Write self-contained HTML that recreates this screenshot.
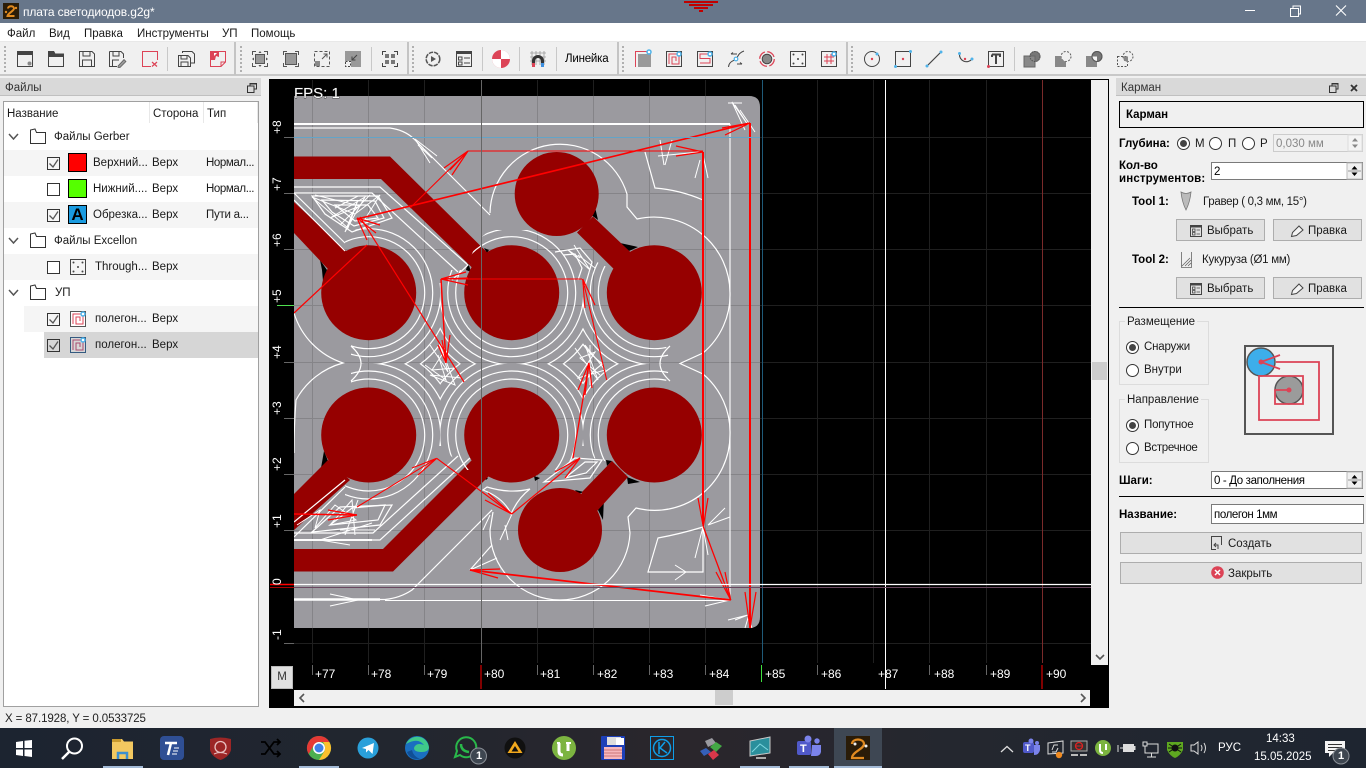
<!DOCTYPE html>
<html><head><meta charset="utf-8"><title>плата светодиодов.g2g*</title>
<style>
html,body{margin:0;padding:0;width:1366px;height:768px;overflow:hidden;background:#f0f0f0;font-family:"Liberation Sans","DejaVu Sans",sans-serif;font-size:11.5px;color:#1a1a1a}
.a{position:absolute}
.t{position:absolute;white-space:nowrap;line-height:14px;margin-top:1px}
.b{font-weight:bold;color:#000}
.n{letter-spacing:-.4px}
.m{letter-spacing:-.25px}
svg.i{position:absolute;top:51px;width:16px;height:16px;overflow:visible}
svg.s{position:absolute;overflow:visible}
.sep{position:absolute;top:47px;width:1px;height:24px;background:#c8c8c8}
.split{position:absolute;top:42px;width:2px;height:33px;background:#c4c4c4}
.grip{position:absolute;top:46px;width:2px;height:26px;background:repeating-linear-gradient(#b0b0b0 0 2px,transparent 2px 4px)}
.row{position:absolute;height:26px}
.cb{position:absolute;left:47px;width:11px;height:11px;border:1px solid #333;background:#fff}
.btn{position:absolute;background:#e1e1e1;border:1px solid #adadad;box-sizing:border-box;height:22px}
.sp{position:absolute;background:#fff;border:1px solid #7a7a7a;box-sizing:border-box}
.r{position:absolute;width:11px;height:11px;border:1px solid #333;border-radius:50%;background:#fff}
.r.on:after{content:"";position:absolute;left:2px;top:2px;width:7px;height:7px;border-radius:50%;background:#444}
.gb{position:absolute;left:1119px;width:88px;border:1px solid #dcdcdc;box-sizing:content-box;height:62px}
.ul{position:absolute;top:766px;height:2px;background:#a3bad6}
.tb{color:#fff}
</style></head><body>
<!-- title bar -->
<div class="a" style="left:0;top:0;width:1366px;height:23px;background:#67768a"></div>
<svg class="s" style="left:3px;top:3px;width:16px;height:16px" viewBox="0 0 16 16"><rect width="16" height="16" fill="#2a1c08"/><path d="M5 5.500C5 2.500 11 2.500 11 5.500 11 8 5 10 4.500 13H11.500" fill="none" stroke="#e08a20" stroke-width="2"/><circle cx="13" cy="5" r="1.200" fill="#e08a20"/><circle cx="3" cy="9" r="1.200" fill="#e08a20"/></svg>
<div class="t" style="left:23px;top:4px;color:#fff;font-size:12px;letter-spacing:-.1px">плата светодиодов.g2g*</div>
<div class="a" style="left:684px;top:1px;width:34px;height:2px;background:#c00000"></div>
<div class="a" style="left:689px;top:4px;width:24px;height:2px;background:#c00000"></div>
<div class="a" style="left:694px;top:7px;width:14px;height:2px;background:#c00000"></div>
<div class="a" style="left:699px;top:10px;width:4px;height:2px;background:#c00000"></div>
<svg class="s" style="left:1240px;top:0;width:120px;height:23px" viewBox="1240 0 120 23"><path d="M1245 10.500H1255" stroke="#fff"/><path d="M1290.500 8.500H1298.500V16.500H1290.500ZM1293 8.500V6H1300.500V14H1298.500" fill="none" stroke="#fff"/><path d="M1336 5.500L1346 15.500M1346 5.500L1336 15.500" stroke="#fff" stroke-width="1.100"/></svg>
<!-- menu -->
<div class="a" style="left:0;top:23px;width:1366px;height:18px;background:#fff"></div>
<div class="t" style="left:7px;top:26px">Файл</div>
<div class="t" style="left:49px;top:26px">Вид</div>
<div class="t" style="left:84px;top:26px">Правка</div>
<div class="t" style="left:137px;top:26px">Инструменты</div>
<div class="t" style="left:222px;top:26px">УП</div>
<div class="t" style="left:251px;top:26px">Помощь</div>
<!-- toolbar -->
<div class="a" style="left:0;top:41px;width:1366px;height:35px;background:#f0f0f0;border-top:1px solid #e8e8e8;border-bottom:2px solid #c8c8c8;box-sizing:border-box"></div>
<div class="grip" style="left:4px"></div><div class="split" style="left:234px"></div><div class="grip" style="left:240px"></div><div class="split" style="left:407px"></div><div class="grip" style="left:412px"></div><div class="split" style="left:617px"></div><div class="grip" style="left:622px"></div><div class="split" style="left:846px"></div><div class="grip" style="left:851px"></div>
<div class="sep" style="left:167px"></div><div class="sep" style="left:371px"></div><div class="sep" style="left:482px"></div><div class="sep" style="left:519px"></div><div class="sep" style="left:556px"></div><div class="sep" style="left:1014px"></div>
<svg class="i" style="left:17px" viewBox="0 0 16 16"><path d="M.5.500H15.500V15.500H.5Z" fill="none" stroke="#444"/><rect width="16" height="4" fill="#444"/><circle cx="12.500" cy="12.500" r="2" fill="#888"/></svg>
<svg class="i" style="left:48px" viewBox="0 0 16 16"><path d="M.5 1V15.500H15.500V3H7L6 1Z" fill="none" stroke="#444"/><path d="M0 0H6L7 2.500H16V6H0Z" fill="#444"/></svg>
<svg class="i" style="left:79px" viewBox="0 0 16 16"><path d="M.5.500H13L15.500 3V15.500H.5ZM4 .5V5H11V.5M3.500 15.500V9H12.500V15.500" fill="none" stroke="#444"/></svg>
<svg class="i" style="left:109px" viewBox="0 0 16 16"><path d="M.5.500H12L14.500 3V7M4 .5V5H10V.5M.5.500V15.500H8M3.500 15V9H10" fill="none" stroke="#444"/><path d="M9 15L15 8.500 17 10.500 11 16.500H9Z" fill="#999" stroke="#555" stroke-width=".7"/></svg>
<svg class="i" style="left:142px" viewBox="0 0 16 16"><path d="M9 15.500H.5V.5H15.500V9" fill="none" stroke="#dc4356"/><path d="M10 11L15 15.500M15 11L10 15.500" stroke="#dc4356" stroke-width="1.200"/></svg>
<svg class="i" style="left:178px" viewBox="0 0 16 16"><path d="M4.500 2V.5H14L16.500 3V12H12.500" fill="none" stroke="#444"/><path d="M.5 4.500H10L12.500 7V15.500H.5ZM3 4.500V8H9V4.500M3 15.500V11H10V15.500" fill="none" stroke="#444"/></svg>
<svg class="i" style="left:210px" viewBox="0 0 16 16"><path d="M.5 9V15.500H11L15.500 11V.5H6" fill="none" stroke="#dc4356"/><path d="M0 0H9V6L6 5 5 9H0Z" fill="#dc4356"/><path d="M4 2L7 2 4 5" fill="#fff"/><path d="M11 15.500V11H15.500" fill="none" stroke="#dc4356"/></svg>
<svg class="i" style="left:252px" viewBox="0 0 16 16"><rect x="3.500" y="3.500" width="9" height="9" fill="#999" stroke="#555"/><path d="M.5 4V.5H4M12 .5H15.500V4M15.500 12V15.500H12M4 15.500H.5V12" fill="none" stroke="#555"/><path d="M8 0L9.500 2H6.500ZM8 16L9.500 14H6.500ZM0 8L2 6.500V9.500ZM16 8L14 6.500V9.500Z" fill="#555"/></svg>
<svg class="i" style="left:283px" viewBox="0 0 16 16"><rect x="2.500" y="2.500" width="11" height="11" fill="#999" stroke="#555"/><path d="M.5 4V.5H4M12 .5H15.500V4M15.500 12V15.500H12M4 15.500H.5V12" fill="none" stroke="#555"/></svg>
<svg class="i" style="left:314px" viewBox="0 0 16 16"><path d="M.5.500H15.500V15.500H.5Z" fill="none" stroke="#555" stroke-dasharray="3 2"/><rect x="1" y="10" width="5" height="5" fill="#888"/><path d="M8 8L13 3M9.500 3H13V6.500" fill="none" stroke="#555"/></svg>
<svg class="i" style="left:345px" viewBox="0 0 16 16"><rect width="16" height="16" fill="#999"/><rect x="0" y="10" width="6" height="6" fill="#f0f0f0"/><path d="M.5 10.500H5.500V15.500H.5Z" fill="none" stroke="#444" stroke-dasharray="2 1.500"/><path d="M12 4L7 9M7 5.500V9H10.500" fill="none" stroke="#444"/></svg>
<svg class="i" style="left:382px" viewBox="0 0 16 16"><path d="M.5 4V.5H4M12 .5H15.500V4M15.500 12V15.500H12M4 15.500H.5V12" fill="none" stroke="#444"/><rect x="3" y="3" width="4" height="4" fill="#777"/><rect x="9" y="3" width="4" height="4" fill="#777"/><rect x="3" y="9" width="4" height="4" fill="#777"/><rect x="9" y="9" width="4" height="4" fill="#777"/></svg>
<svg class="i" style="left:425px" viewBox="0 0 16 16"><circle cx="8" cy="8" r="6.800" fill="none" stroke="#555" stroke-width="1.500" stroke-dasharray="4.500 1"/><path d="M6 5L11 8 6 11Z" fill="#555"/></svg>
<svg class="i" style="left:456px" viewBox="0 0 16 16"><path d="M.5.500H15.500V15.500H.5Z" fill="none" stroke="#444"/><rect width="16" height="3" fill="#444"/><path d="M2.500 6H6V9H2.500ZM2.500 11H6V14H2.500ZM8 7H14M8 12H14" fill="none" stroke="#444"/></svg>
<svg class="s" style="left:492px;top:50px;width:18px;height:18px" viewBox="0 0 18 18"><circle cx="9" cy="9" r="9" fill="#dc4356"/><path d="M9 9V0A9 9 0 0 1 18 9ZM9 9V18A9 9 0 0 1 0 9Z" fill="#fff"/></svg>
<svg class="i" style="left:530px" viewBox="0 0 16 16"><path d="M2 0V14M6 0V14M10 0V14M14 0V14M0 2H16M0 6H16M0 10H16" stroke="#999" stroke-width=".8"/><path d="M3.500 16V10A4.500 4.500 0 0 1 12.500 10V16" fill="none" stroke="#333" stroke-width="3"/><rect x="2" y="12" width="3" height="4" fill="#dc4356"/><rect x="11" y="12" width="3" height="4" fill="#3c8fe0"/></svg>
<div class="t" style="left:565px;top:51px;color:#000;letter-spacing:-.2px">Линейка</div>
<svg class="i" style="left:635px" viewBox="0 0 16 16"><path d="M.5 16V.5H14" fill="none" stroke="#dc4356"/><rect x="3" y="3" width="13" height="13" fill="#999"/><circle cx="14" cy="1" r="2" fill="#fff" stroke="#4fb3ea" stroke-width="1.500"/></svg>
<svg class="i" style="left:666px" viewBox="0 0 16 16"><path d="M.5.500H15.500V15.500H.5Z" fill="none" stroke="#444"/><path d="M3 13V3H13V13H6V6H10V10" fill="none" stroke="#dc4356"/><circle cx="13" cy="3" r="2" fill="#fff" stroke="#4fb3ea" stroke-width="1.500"/></svg>
<svg class="i" style="left:697px" viewBox="0 0 16 16"><path d="M.5.500H15.500V15.500H.5Z" fill="none" stroke="#444"/><path d="M13 3H3V7.500H13V12H3" fill="none" stroke="#dc4356"/><circle cx="13" cy="3" r="2" fill="#fff" stroke="#4fb3ea" stroke-width="1.500"/></svg>
<svg class="i" style="left:728px" viewBox="0 0 16 16"><path d="M.5 16C1 10 6 10 8 8S10 2 16 0" fill="none" stroke="#444"/><path d="M3 3H9M3 3L5 1.500M9 13H14M14 13L12 11.500" stroke="#444" fill="none"/><circle cx="8" cy="8" r="1.800" fill="#fff" stroke="#4fb3ea" stroke-width="1.200"/></svg>
<svg class="i" style="left:759px" viewBox="0 0 16 16"><circle cx="8" cy="8" r="7.300" fill="none" stroke="#dc4356" stroke-width="1.300" stroke-dasharray="9 2.500"/><circle cx="8" cy="8" r="4.800" fill="#888" stroke="#444"/></svg>
<svg class="i" style="left:790px" viewBox="0 0 16 16"><path d="M.5.500H15.500V15.500H.5Z" fill="#f4f4f4" stroke="#444"/><circle cx="3.500" cy="3.500" r="1" fill="#444"/><circle cx="12.500" cy="3.500" r="1" fill="#444"/><circle cx="8" cy="8" r="1" fill="#444"/><circle cx="3.500" cy="12.500" r="1" fill="#444"/><circle cx="12.500" cy="12.500" r="1" fill="#444"/></svg>
<svg class="i" style="left:821px" viewBox="0 0 16 16"><path d="M.5.500H15.500V15.500H.5Z" fill="none" stroke="#444"/><path d="M6 3V13M10 3V13M3 6H13M3 10H13" fill="none" stroke="#dc4356"/><circle cx="13" cy="3" r="2" fill="#fff" stroke="#4fb3ea" stroke-width="1.500"/></svg>
<svg class="i" style="left:864px" viewBox="0 0 16 16"><circle cx="8" cy="8" r="7.500" fill="none" stroke="#444"/><circle cx="8" cy="8" r="1.200" fill="#dc4356"/><circle cx="13" cy="3" r="1.500" fill="#4fb3ea"/></svg>
<svg class="i" style="left:895px" viewBox="0 0 16 16"><path d="M.5.500H15.500V15.500H.5Z" fill="none" stroke="#444"/><circle cx="8" cy="8" r="1.200" fill="#dc4356"/><circle cx="15.500" cy=".5" r="1.500" fill="#4fb3ea"/><circle cx=".5" cy="15.500" r="1.500" fill="#4fb3ea"/></svg>
<svg class="i" style="left:926px" viewBox="0 0 16 16"><path d="M1 15L15 1" stroke="#444" stroke-width="1.200"/><circle cx="15" cy="1" r="1.500" fill="#4fb3ea"/><circle cx="1" cy="15" r="1.500" fill="#4fb3ea"/></svg>
<svg class="i" style="left:957px" viewBox="0 0 16 16"><path d="M2.500 3A7 7 0 0 0 15 8" fill="none" stroke="#444" stroke-width="1.100"/><circle cx="8" cy="8" r="1.200" fill="#dc4356"/><circle cx="2.500" cy="2.500" r="1.500" fill="#4fb3ea"/><circle cx="15" cy="8" r="1.500" fill="#4fb3ea"/></svg>
<svg class="i" style="left:988px" viewBox="0 0 16 16"><path d="M.5.500H15.500V15.500H.5Z" fill="none" stroke="#444"/><path d="M4 3.500H12V6M8 3.500V13" fill="none" stroke="#444" stroke-width="2"/><path d="M4 3.500V6" stroke="#444" stroke-width="2"/><circle cx=".5" cy="15.500" r="1.500" fill="#dc4356"/></svg>
<svg class="i" style="left:1024px" viewBox="0 0 16 16"><circle cx="11" cy="5.500" r="5.500" fill="#777"/><rect y="5" width="11" height="11" fill="#888" stroke="#666"/><circle cx="11" cy="5.500" r="5" fill="none" stroke="#555" stroke-dasharray="1.500 1"/></svg>
<svg class="i" style="left:1055px" viewBox="0 0 16 16"><circle cx="11" cy="5.500" r="5" fill="none" stroke="#555" stroke-dasharray="2 1.500"/><path d="M0 5H6A5.500 5.500 0 0 0 11 10.500V16H0Z" fill="#888"/></svg>
<svg class="i" style="left:1086px" viewBox="0 0 16 16"><rect y="5" width="11" height="11" fill="#888"/><circle cx="11" cy="5.500" r="5.500" fill="#777"/><path d="M6 5.500H11V11A5.500 5.500 0 0 1 6 5.500Z" fill="#f4f4f4"/><circle cx="11" cy="5.500" r="5" fill="none" stroke="#555"/></svg>
<svg class="i" style="left:1117px" viewBox="0 0 16 16"><rect x=".5" y="5.500" width="10" height="10" fill="none" stroke="#555" stroke-dasharray="2 1.500"/><circle cx="11" cy="5.500" r="5" fill="none" stroke="#555" stroke-dasharray="2 1.500"/><path d="M6 5.500H11V11A5.500 5.500 0 0 1 6 5.500Z" fill="#888"/></svg>

<!-- left dock -->
<div class="a" style="left:0;top:78px;width:261px;height:17px;background:#d9d9d9;border-bottom:1px solid #c0c0c0"></div>
<div class="t" style="left:5px;top:80px;color:#333">Файлы</div>
<svg class="s" style="left:247px;top:83px;width:10px;height:10px" viewBox="0 0 10 10"><path d="M3 2.500V.5H9.500V6H7.500M.5 3H7V9.500H.5Z" fill="none" stroke="#333"/><path d="M0 3H7.500M3 1H9.500" stroke="#333"/></svg>
<div class="a" style="left:3px;top:101px;width:256px;height:606px;background:#fff;border:1px solid #a0a0a0;box-sizing:border-box"></div>
<div class="a" style="left:149px;top:102px;width:1px;height:21px;background:#e8e8e8"></div><div class="a" style="left:203px;top:102px;width:1px;height:21px;background:#e8e8e8"></div><div class="a" style="left:257px;top:102px;width:1px;height:21px;background:#e8e8e8"></div>
<div class="t" style="left:7px;top:106px">Название</div><div class="t" style="left:153px;top:106px">Сторона</div><div class="t" style="left:207px;top:106px">Тип</div>
<div class="row" style="left:4px;top:150px;width:254px;background:#f5f5f5"></div>
<div class="row" style="left:4px;top:202px;width:254px;background:#f5f5f5"></div>
<div class="row" style="left:4px;top:254px;width:254px;background:#f5f5f5"></div>
<div class="row" style="left:24px;top:306px;width:234px;background:#f5f5f5"></div>
<div class="row" style="left:44px;top:332px;width:214px;background:#d6d6d6"></div>
<svg class="s" style="left:0;top:0;width:260px;height:360px" viewBox="0 0 260 360">
<g fill="none" stroke="#555" stroke-width="1.500"><path d="M9 134L13.500 139 18 134M9 238L13.500 243 18 238M9 290L13.500 295 18 290"/></g>
<g fill="none" stroke="#333"><path d="M30.500 130V143.500H45.500V132.500H36.500L35 129 30.500 130Z"/><path d="M30.500 234V247.500H45.500V236.500H36.500L35 233 30.500 234Z"/><path d="M30.500 286V299.500H45.500V288.500H36.500L35 285 30.500 286Z"/></g>
<g fill="none" stroke="#555" stroke-width="1.300"><path d="M49.500 163.500L53 167 58 159.500"/><path d="M49.500 215.500L53 219 58 211.500"/><path d="M49.500 319.500L53 323 58 315.500"/><path d="M49.500 345.500L53 349 58 341.500"/></g>
</svg>
<div class="cb" style="top:157px;background:transparent"></div><div class="cb" style="top:183px"></div><div class="cb" style="top:209px;background:transparent"></div><div class="cb" style="top:261px"></div><div class="cb" style="top:313px;background:transparent"></div><div class="cb" style="top:339px;background:transparent"></div>
<div class="a" style="left:68px;top:153px;width:17px;height:17px;background:#f00;border:1px solid #000"></div>
<div class="a" style="left:68px;top:179px;width:17px;height:17px;background:#5f0;border:1px solid #000"></div>
<div class="a" style="left:68px;top:205px;width:17px;height:17px;background:#1a9be0;border:1px solid #000;font:bold 17px/18px 'Liberation Sans',sans-serif;text-align:center;color:#000">A</div>
<svg class="s" style="left:70px;top:259px;width:16px;height:16px" viewBox="0 0 16 16"><path d="M.5.500H15.500V15.500H.5Z" fill="#f4f4f4" stroke="#444"/><circle cx="3.500" cy="3.500" r="1" fill="#444"/><circle cx="12.500" cy="3.500" r="1" fill="#444"/><circle cx="8" cy="8" r="1" fill="#444"/><circle cx="3.500" cy="12.500" r="1" fill="#444"/><circle cx="12.500" cy="12.500" r="1" fill="#444"/></svg>
<svg class="s" style="left:70px;top:311px;width:16px;height:16px" viewBox="0 0 16 16"><path d="M.5.500H15.500V15.500H.5Z" fill="#fff" stroke="#555"/><path d="M3 13V3H13V13H6V6H10V10" fill="none" stroke="#dc4356"/><circle cx="13" cy="3" r="2" fill="#fff" stroke="#4fb3ea" stroke-width="1.500"/></svg>
<svg class="s" style="left:70px;top:337px;width:16px;height:16px" viewBox="0 0 16 16"><path d="M.5.500H15.500V15.500H.5Z" fill="#d6d6d6" stroke="#345a80"/><path d="M3 13V3H13V13H6V6H10V10" fill="none" stroke="#a84a70"/><circle cx="13" cy="3" r="2" fill="#fff" stroke="#4fb3ea" stroke-width="1.500"/></svg>
<div class="t" style="left:54px;top:129px">Файлы Gerber</div>
<div class="t" style="left:93px;top:155px">Верхний...</div><div class="t" style="left:152px;top:155px">Верх</div><div class="t n" style="left:206px;top:155px">Нормал...</div>
<div class="t" style="left:93px;top:181px">Нижний....</div><div class="t" style="left:152px;top:181px">Верх</div><div class="t n" style="left:206px;top:181px">Нормал...</div>
<div class="t" style="left:93px;top:207px">Обрезка...</div><div class="t" style="left:152px;top:207px">Верх</div><div class="t m" style="left:206px;top:207px">Пути а...</div>
<div class="t" style="left:54px;top:233px">Файлы Excellon</div>
<div class="t" style="left:95px;top:259px">Through...</div><div class="t" style="left:152px;top:259px">Верх</div>
<div class="t" style="left:55px;top:285px">УП</div>
<div class="t" style="left:95px;top:311px">полегон...</div><div class="t" style="left:152px;top:311px">Верх</div>
<div class="t" style="left:95px;top:337px">полегон...</div><div class="t" style="left:152px;top:337px">Верх</div>

<!-- canvas -->
<div class="a" style="left:269px;top:79px;width:840px;height:629px;background:#000;border:0"></div>
<svg class="s" style="left:0;top:0;width:1366px;height:768px;pointer-events:none" viewBox="0 0 1366 768">
<defs>
<clipPath id="cv"><rect x="270" y="80" width="821" height="585"/></clipPath>
<clipPath id="ca"><polygon points="345,238 365,222 400,222 468,278 440,285 440,364 351,364 351,345"/></clipPath>
<clipPath id="cb"><polygon points="440,270 465,270 478,240 490,230 575,230 583,250 583,364 440,364"/></clipPath>
<clipPath id="cc"><polygon points="583,255 603,265 654,292 670,364 583,364"/></clipPath>
<clipPath id="cd"><polygon points="351,383 351,364 440,364 440,450 470,458 395,515 345,500 345,480"/></clipPath>
<clipPath id="ce"><polygon points="440,364 583,364 583,450 560,470 465,470 440,445"/></clipPath>
<clipPath id="cf"><polygon points="583,364 670,364 654,435 608,462 583,455"/></clipPath>
<clipPath id="xa"><rect x="361" y="283" width="79" height="81"/></clipPath>
<clipPath id="xb"><rect x="440" y="283" width="143" height="81"/></clipPath>
<clipPath id="xc"><rect x="583" y="283" width="79" height="81"/></clipPath>
<clipPath id="xd"><rect x="361" y="364" width="79" height="82"/></clipPath>
<clipPath id="xe"><rect x="440" y="364" width="143" height="82"/></clipPath>
<clipPath id="xf"><rect x="583" y="364" width="79" height="82"/></clipPath>
</defs>
<g clip-path="url(#cv)">
<!-- grid on black -->
<g stroke="#1f1f1f"><path d="M312.500 80V663M368.500 80V663M424.500 80V663M537.500 80V663M593.500 80V663M649.500 80V663M705.500 80V663M817.500 80V663M873.500 80V663M929.500 80V663M986.500 80V663M294 137.500H1091M294 193.500H1091M294 249.500H1091M294 305.500H1091M294 362.500H1091M294 418.500H1091M294 474.500H1091M294 530.500H1091M294 643.500H1091"/></g>
<path d="M294 96H749Q760 96 760 107V617Q760 628 749 628H294Z" fill="#9b9a9f"/>
<g stroke="#858488"><path d="M312.500 96V628M368.500 96V628M424.500 96V628M537.500 96V628M593.500 96V628M649.500 96V628M705.500 96V628M294 193.500H760M294 249.500H760M294 305.500H760M294 362.500H760M294 418.500H760M294 474.500H760M294 530.500H760"/></g>
<!-- black corners -->
<g fill="#000"><polygon points="320,260 327,270 323,281 322,270"/><polygon points="342,249 346,252 344,254"/><polygon points="484,248 489,250 487,253"/><polygon points="468,262 471,272 466,270"/><polygon points="595,207 598,220 590,214"/><polygon points="620,243 629,251 638,247"/><polygon points="321,468 328,461 324,451"/><polygon points="598,510 604,498 603,520"/><polygon points="627,477 640,482 628,484"/><polygon points="534,476 540,478 535,481"/><polygon points="575,490 584,492 578,494"/><polygon points="606,460 612,461 607,466"/><polygon points="484,477 488,478 486,480"/></g>
<!-- traces -->
<g fill="#960000">
<polygon points="294,156.500 390,156.500 510,275 490,285 381,179 294,179"/>
<polygon points="294,202 345,250 375,280 350,292 327,268 294,233"/>
<polygon points="294,494 328,460 350,480 294,530"/>
<polygon points="294,549 383,549 472,460 490,475 393,571.500 294,571.500"/>
<polygon points="577,232.500 593,216.500 665,285 640,295"/>
<polygon points="582,492 612,461 628,477 598,510 570,540"/>
</g>
<!-- offset arcs -->
<g fill="none" stroke="#fff" stroke-width="1.200">
<g clip-path="url(#ca)"><circle cx="368.700" cy="292.700" r="56"/><circle cx="368.700" cy="292.700" r="64"/></g>
<g clip-path="url(#cb)"><circle cx="511.700" cy="292.700" r="56"/><circle cx="511.700" cy="292.700" r="64"/></g>
<g clip-path="url(#cc)"><circle cx="654.300" cy="292.700" r="56"/><circle cx="654.300" cy="292.700" r="64"/></g>
<g clip-path="url(#cd)"><circle cx="368.700" cy="435" r="56"/><circle cx="368.700" cy="435" r="64"/></g>
<g clip-path="url(#ce)"><circle cx="511.700" cy="435" r="56"/><circle cx="511.700" cy="435" r="64"/></g>
<g clip-path="url(#cf)"><circle cx="654.300" cy="435" r="56"/><circle cx="654.300" cy="435" r="64"/></g>
<g clip-path="url(#xa)"><circle cx="368.700" cy="292.700" r="72"/><circle cx="368.700" cy="292.700" r="80"/><circle cx="368.700" cy="292.700" r="88"/></g>
<g clip-path="url(#xb)"><circle cx="511.700" cy="292.700" r="72"/><circle cx="511.700" cy="292.700" r="80"/><circle cx="511.700" cy="292.700" r="88"/></g>
<g clip-path="url(#xc)"><circle cx="654.300" cy="292.700" r="72"/><circle cx="654.300" cy="292.700" r="80"/><circle cx="654.300" cy="292.700" r="88"/></g>
<g clip-path="url(#xd)"><circle cx="368.700" cy="435" r="72"/><circle cx="368.700" cy="435" r="80"/><circle cx="368.700" cy="435" r="88"/></g>
<g clip-path="url(#xe)"><circle cx="511.700" cy="435" r="72"/><circle cx="511.700" cy="435" r="80"/><circle cx="511.700" cy="435" r="88"/></g>
<g clip-path="url(#xf)"><circle cx="654.300" cy="435" r="72"/><circle cx="654.300" cy="435" r="80"/><circle cx="654.300" cy="435" r="88"/></g>
<!-- ) shapes near board sides -->
<path d="M351 346Q361 355 361 363.500Q361 372 351 381M670 346Q660 355 660 363.500Q660 372 670 381"/>
<!-- outer boundaries -->
<path d="M294 313A76 76 0 0 0 343 363A76 76 0 0 0 296 400Q294 425 294 453"/>
<path d="M490 213A70 70 0 0 1 627 194V207L637 219A76 76 0 0 1 730 292.700A76 76 0 0 1 703 353L680 363.500L703 374A76 76 0 0 1 730 435A76 76 0 0 1 703 493A76 76 0 0 1 636 508L628 517L630 533A70 70 0 0 1 560 600A70 70 0 0 1 490 530L493 512"/>
<path d="M730 124V600" stroke-width="1.100"/>
<path d="M294 128H390Q404 130 413 138L490 215"/>
<path d="M294 599.500H385Q400 598 412 590L492 510"/>
<path d="M385 600.500H730" stroke-width="1.100"/>
<path d="M645 152L655 188Q680 190 703 200"/>
<path d="M658 538L648 572H703V527Q680 534 658 538Z"/>
<path d="M483 490L487 487Q510 494 530 489Q518 498 511 514Q504 498 483 490Z"/>
<path d="M470 570L492 545M470 570L497 558"/>
<!-- trace offsets upper-left -->
<path d="M294 187H380L468 265L452 280"/><path d="M294 193H372L458 272"/><path d="M294 193L345 243"/><path d="M294 200L345 251"/>
<path d="M312 196H378L392 218L352 232L325 214Z"/><path d="M322 200L375 201L384 218L354 226L332 212Z"/><path d="M335 205H368L378 218L355 221Z"/>
<path d="M294 540H380L470 458M294 533H373L458 456M294 537L345 487M294 522L345 480"/>
<path d="M312 532L380 525L392 505L340 507Z"/><path d="M330 525L378 520L385 505L352 508Z"/>
<path d="M575 458L602 460L590 478L544 482ZM585 462L597 462L586 473L565 478Z"/>
<path d="M555 252L580 248L592 262L585 286M563 255L575 254L582 268L578 280"/>
</g>
<path d="M294 124H730" stroke="#fff" stroke-width="2"/>
<path d="M294 599.500H380" stroke="#fff" stroke-width="2.500"/>
<path d="M294 540H372" stroke="#fff" stroke-width="2"/>
<!-- pads -->
<g fill="#960000"><circle cx="368.700" cy="292.700" r="47.500"/><circle cx="511.700" cy="292.700" r="47.500"/><circle cx="654.300" cy="292.700" r="47.500"/><circle cx="368.700" cy="435" r="47.500"/><circle cx="511.700" cy="435" r="47.500"/><circle cx="654.300" cy="435" r="47.500"/><circle cx="556.700" cy="194" r="42"/><circle cx="560" cy="530" r="42"/></g>
<!-- white hatch arrows -->
<g stroke="#fff" stroke-width="1" fill="none">
<path d="M315 195L360 206L330 218L365 197L345 232L358 200L348 228L312 197L355 214L380 195L362 224M335 208L358 196M340 225L370 195"/>
<path d="M297 525L320 510L315 528L335 505L356 520L330 525L352 500L355 535M345 535L358 500M340 530L375 530M372 523L320 540L350 545"/>
<path d="M415 139L430 163M415 139L437 156M418 145L432 158"/>
<path d="M430 345L448 372L440 345L455 385L430 375L462 378M425 365L446 380L438 355M445 350L432 370L455 368"/>
<path d="M575 348L598 380L585 345L605 370L578 378L595 352L580 358L600 375M590 345L590 385"/>
<path d="M660 140L664 165M672 140L665 165M658 156L700 152"/>
<path d="M735 105L748 125L732 102L745 130M728 103H742M740 110L755 132M700 160L695 178M703 155L708 178"/>
<path d="M580 258L568 250L590 270L574 245M578 255L595 268"/>
<path d="M358 600L330 594M358 600L330 606M340 600H362"/>
<path d="M686 572L675 565M686 572L675 580M660 572H703"/>
<path d="M703 527L695 558M703 527L708 555M708 525L725 508M708 525L730 517"/>
<path d="M730 600L700 595M730 600L705 606M735 620L748 615L728 620M745 628L748 618L752 628"/>
<path d="M492 510L477 525M490 515L483 530M505 525L508 540M512 514L500 540"/>
</g>
<!-- red rapids -->
<g stroke="#f00" fill="none">
<path d="M294 313L367 245" stroke-width="1.200"/>
<path d="M357 219L750 123" stroke-width="1.600"/>
<path d="M750 123V628" stroke-width="2"/>
<path d="M703 152V524" stroke-width="2"/>
<path d="M468 151H703" stroke-width="1.100"/>
<path d="M468 151L410 208" stroke-width="1.100"/>
<path d="M441 279H582" stroke-width="1.100"/>
<path d="M582.700 279L606.700 380" stroke-width="1.100"/>
<path d="M441 279L446 363" stroke-width="1.500"/>
<path d="M360 217L464 382" stroke-width="1.200"/>
<path d="M589 363L573 458" stroke-width="1.300"/>
<path d="M294 514L357 515" stroke-width="1.500"/>
<path d="M357 507L436.700 458.300" stroke-width="1.100"/>
<path d="M436.700 458.300L511.700 514" stroke-width="1.200"/>
<path d="M511.700 514L580 458" stroke-width="1.200"/>
<path d="M703.300 526.700L730.700 600" stroke-width="1.300"/>
<path d="M730.700 600L470 570" stroke-width="1.800"/>
<g stroke-width="1.200">
<path d="M357 218L376 233M357 218L367 240M357 218L380 225"/>
<path d="M468 151L444 168M468 151L452 175M468 151L450 170"/>
<path d="M750 123L722 128M750 123L725 135M703 152L676 146M703 152L676 156"/>
<path d="M441 279L468 278M441 279L468 285M441 279L466 272"/>
<path d="M446 363L442 340M446 363L450 335M446 363L438 345"/>
<path d="M582.700 279L595 305M582.700 279L585 308"/>
<path d="M589 363L578 390M589 363L585 395M589 363L592 388"/>
<path d="M357 515L328 510M357 515L328 520"/>
<path d="M436.700 458.300L412 468M436.700 458.300L418 475"/>
<path d="M511.700 514L488 493M511.700 514L485 500"/>
<path d="M580 458L555 472M580 458L565 478"/>
<path d="M703.300 526.700L698 498M703.300 526.700L708 498M703 526L703 498"/>
<path d="M730.700 600L716 572M730.700 600L725 572"/>
<path d="M470 570L500 569M470 570L498 578"/>
<path d="M750 628L745 592M750 628L756 592"/>
</g></g>
<!-- crosshairs & guide lines -->
<path d="M294 137.500H760" stroke="#63a4c8"/>
<path d="M762.500 80V663" stroke="#1f5a78"/>
<path d="M481.500 80V663" stroke="#666"/>
<path d="M885.500 80V690" stroke="#fff"/>
<path d="M1042.500 80V663" stroke="#7a2a2a"/>
<path d="M294 587.500H1091" stroke="#6a4860"/>
<path d="M294 584.500H1091" stroke="#fff" stroke-width="1.200"/>
</g>
<!-- left ruler -->
<rect x="270" y="80" width="24" height="583" fill="#000"/>
<g stroke="#666"><path d="M284 137.500H294M284 193.500H294M284 249.500H294M284 362.500H294M284 418.500H294M284 474.500H294M284 530.500H294M284 643.500H294"/></g>
<path d="M277 305.500H294" stroke="#4fe04f"/>
<path d="M270 584.500H294" stroke="#f00" stroke-width="1.500"/>
<path d="M270 587.500H294" stroke="#a00"/>
<g fill="#fff" font-family="'Liberation Sans',sans-serif" font-size="12">
<text transform="translate(281 134) rotate(-90)">+8</text>
<text transform="translate(281 191) rotate(-90)">+7</text>
<text transform="translate(281 247) rotate(-90)">+6</text>
<text transform="translate(281 303) rotate(-90)">+5</text>
<text transform="translate(281 359) rotate(-90)">+4</text>
<text transform="translate(281 415) rotate(-90)">+3</text>
<text transform="translate(281 471) rotate(-90)">+2</text>
<text transform="translate(281 528) rotate(-90)">+1</text>
<text transform="translate(281 585) rotate(-90)">0</text>
<text transform="translate(281 640) rotate(-90)">-1</text>
</g>
<!-- bottom ruler -->
<rect x="270" y="663" width="821" height="27" fill="#000"/>
<g stroke="#666"><path d="M312.500 665V675M368.500 665V675M424.500 665V675M537.500 665V675M593.500 665V675M649.500 665V675M705.500 665V675M817.500 665V675M929.500 665V675M986.500 665V675"/></g>
<path d="M481 665V689M1042 665V689" stroke="#f00"/><path d="M761.500 665V682" stroke="#3fe03f"/><path d="M885.500 663V689" stroke="#fff"/>
<g fill="#fff" font-family="'Liberation Sans',sans-serif" font-size="12">
<text x="315" y="678">+77</text><text x="371" y="678">+78</text><text x="427" y="678">+79</text><text x="484" y="678">+80</text><text x="540" y="678">+81</text><text x="597" y="678">+82</text><text x="653" y="678">+83</text><text x="709" y="678">+84</text><text x="765" y="678">+85</text><text x="821" y="678">+86</text><text x="878" y="678">+87</text><text x="934" y="678">+88</text><text x="990" y="678">+89</text><text x="1046" y="678">+90</text>
</g>
<text x="294" y="98" fill="#fff" font-family="'Liberation Sans',sans-serif" font-size="15" style="paint-order:stroke" stroke="#222" stroke-width=".8">FPS: 1</text>
</svg>
<div class="a" style="left:271px;top:666px;width:20px;height:21px;background:#e1e1e1;border:1px solid #bbb;text-align:center;line-height:21px;color:#333">M</div>
<div class="a" style="left:294px;top:690px;width:796px;height:16px;background:#f0f0f0"></div>
<div class="a" style="left:715px;top:690px;width:18px;height:15px;background:#cdcdcd"></div>
<div class="a" style="left:1091px;top:80px;width:17px;height:585px;background:#f0f0f0"></div>
<div class="a" style="left:1092px;top:362px;width:15px;height:18px;background:#cdcdcd"></div>
<svg class="s" style="left:0;top:0;width:1366px;height:768px" viewBox="0 0 1366 768"><path d="M304 694L300 698 304 702M1081 694L1085 698 1081 702M1096 655L1100 659 1104 655" fill="none" stroke="#555" stroke-width="1.600"/></svg>

<!-- status -->
<div class="t" style="left:5px;top:711px;color:#222;letter-spacing:-.1px">X = 87.1928, Y = 0.0533725</div>

<!-- right dock -->
<div class="a" style="left:1116px;top:78px;width:250px;height:17px;background:#d9d9d9;border-bottom:1px solid #c0c0c0"></div>
<div class="t" style="left:1121px;top:80px;color:#333">Карман</div>
<svg class="s" style="left:1329px;top:83px;width:30px;height:10px" viewBox="0 0 30 10"><path d="M3 2.500V.5H9V6H7M.5 3H7V9.500H.5Z" fill="none" stroke="#333"/><path d="M0 3H7.500M3 1H9.500" stroke="#333"/><path d="M22 2L28 8M28 2L22 8" stroke="#333" stroke-width="1.800"/></svg>
<div class="a" style="left:1119px;top:101px;width:245px;height:27px;border:1px solid #000;box-sizing:border-box"></div>
<div class="t b" style="left:1126px;top:107px">Карман</div>
<div class="t b" style="left:1119px;top:136px">Глубина:</div>
<div class="r on" style="left:1177px;top:137px"></div><div class="t" style="left:1195px;top:136px">М</div>
<div class="r" style="left:1209px;top:137px"></div><div class="t" style="left:1228px;top:136px">П</div>
<div class="r" style="left:1242px;top:137px"></div><div class="t" style="left:1260px;top:136px">Р</div>
<div class="a" style="left:1273px;top:134px;width:90px;height:18px;border:1px solid #ccc;box-sizing:border-box;background:#f0f0f0"></div>
<div class="t" style="left:1276px;top:136px;color:#888">0,030 мм</div>
<div class="t b" style="left:1119px;top:158px">Кол-во</div>
<div class="t b" style="left:1119px;top:171px;letter-spacing:.15px">инструментов:</div>
<div class="sp" style="left:1211px;top:162px;width:152px;height:18px"></div>
<div class="t" style="left:1214px;top:164px;color:#000">2</div>
<div class="t b" style="left:1132px;top:194px">Tool 1:</div>
<svg class="s" style="left:1180px;top:192px;width:12px;height:18px" viewBox="0 0 12 18"><path d="M1 0Q2 10 6 18Q10 10 11 0Q6 3 1 0Z" fill="#bbb" stroke="#777" stroke-width=".8"/></svg>
<div class="t" style="left:1203px;top:194px;letter-spacing:-.3px">Гравер ( 0,3 мм, 15°)</div>
<div class="btn" style="left:1176px;top:219px;width:89px"></div><div class="btn" style="left:1273px;top:219px;width:89px"></div>
<div class="t" style="left:1207px;top:223px">Выбрать</div><div class="t" style="left:1308px;top:223px">Правка</div>
<div class="t b" style="left:1132px;top:252px">Tool 2:</div>
<svg class="s" style="left:1181px;top:252px;width:11px;height:16px" viewBox="0 0 11 16"><path d="M.5 0V15.500H10.500V0M1 14L9 6M4 14L10 8M7 14L10 11" fill="none" stroke="#666" stroke-width=".8"/></svg>
<div class="t m" style="left:1202px;top:252px">Кукуруза (Ø1 мм)</div>
<div class="btn" style="left:1176px;top:277px;width:89px"></div><div class="btn" style="left:1273px;top:277px;width:89px"></div>
<div class="t" style="left:1207px;top:281px">Выбрать</div><div class="t" style="left:1308px;top:281px">Правка</div>
<svg class="s" style="left:0;top:0;width:1366px;height:768px" viewBox="0 0 1366 768">
<g fill="none" stroke="#444"><path d="M1190.500 225.500H1201.500V236.500H1190.500Z"/><path d="M1190.500 283.500H1201.500V294.500H1190.500Z"/></g>
<rect x="1190" y="225" width="12" height="2.500" fill="#444"/><rect x="1190" y="283" width="12" height="2.500" fill="#444"/>
<path d="M1192.500 229H1195V231.500H1192.500ZM1192.500 232.500H1195V235H1192.500ZM1196.500 230H1200M1196.500 234H1200M1192.500 287H1195V289.500H1192.500ZM1192.500 290.500H1195V293H1192.500ZM1196.500 288H1200M1196.500 292H1200" fill="none" stroke="#444" stroke-width=".8"/>
<path d="M1291.500 236.500L1292.500 232.500 1299 226 1303 230 1296.500 235.500ZM1291.500 294.500L1292.500 290.500 1299 284 1303 288 1296.500 293.500Z" fill="#f4f4f4" stroke="#444"/>
</svg>
<svg class="s" style="left:1347px;top:163px;width:15px;height:16px" viewBox="0 0 15 16"><rect width="15" height="16" fill="#f0f0f0" stroke="#bbb"/><path d="M7.500 3L10.500 6.500H4.500ZM7.500 13L10.500 9.500H4.500Z" fill="#000"/><path d="M1 8H14" stroke="#999"/></svg>
<svg class="s" style="left:1348px;top:135px;width:14px;height:16px" viewBox="0 0 14 16"><rect width="14" height="16" fill="#f4f4f4" stroke="#ddd"/><path d="M7 3L10 6.500H4ZM7 13L10 9.500H4Z" fill="#888"/></svg>
<div class="a" style="left:1119px;top:307px;width:245px;height:1px;background:#000"></div>
<div class="gb" style="top:321px"></div>
<div class="t" style="left:1125px;top:314px;background:#f0f0f0;padding:0 2px">Размещение</div>
<div class="r on" style="left:1126px;top:341px"></div><div class="t" style="left:1144px;top:339px;letter-spacing:-.2px">Снаружи</div>
<div class="r" style="left:1126px;top:364px"></div><div class="t" style="left:1144px;top:362px">Внутри</div>
<div class="gb" style="top:399px"></div>
<div class="t" style="left:1125px;top:392px;background:#f0f0f0;padding:0 2px">Направление</div>
<div class="r on" style="left:1126px;top:419px"></div><div class="t" style="left:1144px;top:417px;letter-spacing:-.2px">Попутное</div>
<div class="r" style="left:1126px;top:442px"></div><div class="t" style="left:1144px;top:440px;letter-spacing:-.3px">Встречное</div>
<svg class="s" style="left:0;top:0;width:1366px;height:768px" viewBox="0 0 1366 768">
<rect x="1245" y="346" width="88" height="88" fill="none" stroke="#555" stroke-width="2"/>
<circle cx="1261" cy="362" r="14" fill="#3daeea" stroke="#555" stroke-width="1.500"/>
<circle cx="1289" cy="390" r="14" fill="#9b9b9b" stroke="#555" stroke-width="1.500"/>
<path d="M1276 362H1319V420H1259V376H1303V404H1275V390H1289M1261 362L1280 355M1261 362L1280 369" fill="none" stroke="#dc4356" stroke-width="1.800"/>
<circle cx="1261" cy="362" r="2.500" fill="#dc4356"/><circle cx="1289" cy="390" r="2.500" fill="#dc4356"/>
</svg>
<div class="t b" style="left:1119px;top:473px">Шаги:</div>
<div class="sp" style="left:1211px;top:471px;width:152px;height:18px"></div>
<div class="t" style="left:1214px;top:473px;color:#000;letter-spacing:-.35px">0 - До заполнения</div>
<svg class="s" style="left:1347px;top:472px;width:15px;height:16px" viewBox="0 0 15 16"><rect width="15" height="16" fill="#f0f0f0" stroke="#bbb"/><path d="M7.500 3L10.500 6.500H4.500ZM7.500 13L10.500 9.500H4.500Z" fill="#000"/><path d="M1 8H14" stroke="#999"/></svg>
<div class="a" style="left:1119px;top:496px;width:245px;height:1px;background:#000"></div>
<div class="t b" style="left:1119px;top:507px">Название:</div>
<div class="sp" style="left:1211px;top:504px;width:153px;height:20px"></div>
<div class="t" style="left:1214px;top:507px;color:#000;letter-spacing:-.4px">полегон 1мм</div>
<div class="btn" style="left:1120px;top:532px;width:242px"></div>
<div class="t" style="left:1228px;top:536px">Создать</div>
<svg class="s" style="left:1211px;top:536px;width:12px;height:14px" viewBox="0 0 12 14"><path d="M5 13.500H.5V.5H10.500V9M7 13V9H3M5 7L3 9 5 11" fill="none" stroke="#444"/></svg>
<div class="btn" style="left:1120px;top:562px;width:242px"></div>
<div class="t" style="left:1228px;top:566px">Закрыть</div>
<svg class="s" style="left:1211px;top:566px;width:13px;height:13px" viewBox="0 0 13 13"><circle cx="6.500" cy="6.500" r="6.300" fill="#dc4356"/><path d="M4 4L9 9M9 4L4 9" stroke="#fff" stroke-width="1.500"/></svg>

<!-- taskbar -->
<div class="a" style="left:0;top:728px;width:1366px;height:40px;background:linear-gradient(90deg,#1c2430 0,#22262f 30%,#2a262c 50%,#24272f 70%,#1e2530 100%)"></div>
<div class="a" style="left:834px;top:728px;width:48px;height:40px;background:#3e4753"></div>
<div class="ul" style="left:103px;width:40px"></div><div class="ul" style="left:299px;width:40px"></div><div class="ul" style="left:740px;width:40px"></div><div class="ul" style="left:789px;width:40px"></div><div class="ul" style="left:834px;width:48px"></div>
<svg class="s" style="left:0;top:728px;width:1366px;height:40px" viewBox="0 728 1366 40">
<path d="M16 742L23 741V748H16ZM24.500 740.800L32 740V748H24.500ZM16 749.500H23V756L16 755ZM24.500 749.500H32V757L24.500 756Z" fill="#fff"/>
<circle cx="74.500" cy="746" r="7.500" fill="none" stroke="#fff" stroke-width="2"/><path d="M69 752L62 759" stroke="#fff" stroke-width="2.500"/>
<path d="M112 739H122L124 741.500H133V759H112Z" fill="#f3c860"/><rect x="112" y="739" width="9" height="3" fill="#c99a2e"/><path d="M118 759V753H127V759" fill="none" stroke="#3c8fd0" stroke-width="2.500"/>
<rect x="160" y="736" width="24" height="24" rx="4" fill="#2f4f94"/><path d="M165 743H177M171 743L168 755" stroke="#fff" stroke-width="2.500" fill="none"/><path d="M174 748H179M173 751H178M172 754H177" stroke="#fff" stroke-width="1"/>
<path d="M210 739Q220 736 231 739V750Q229 757 220.500 760Q212 757 210 750Z" fill="#9c2626"/><circle cx="220.500" cy="747" r="5.500" fill="none" stroke="#e8c0c0" stroke-width="1.300"/><path d="M214 754Q220 751 227 754" stroke="#e8c0c0" fill="none"/>
<path d="M261 742H265L274 754H280M261 754H265L274 742H280M277 739L280 742 277 745M277 751L280 754 277 757" fill="none" stroke="#000" stroke-width="1.800"/>
<circle cx="319" cy="748" r="12" fill="#4caf50"/><path d="M319 736A12 12 0 0 0 308.600 754L314 745Q316 742 319 742H329.400A12 12 0 0 0 319 736Z" fill="#e53935"/><path d="M329.400 742A12 12 0 0 1 319 760L324.500 751Q326 746 323 742Z" fill="#fbc02d"/><circle cx="319" cy="748" r="6" fill="#fff"/><circle cx="319" cy="748" r="4.500" fill="#3f80e8"/>
<circle cx="368" cy="748" r="10.500" fill="#2aa0da"/><path d="M362 748L374 743 372.500 754 368.500 750 366 752.500V749Z" fill="#fff"/>
<circle cx="417" cy="748" r="12" fill="#1a6fc0"/><path d="M406 744A12 12 0 0 1 429 748Q428 752 422 752Q414 752 414 748Q416 742 424 745Q418 737 406 744Z" fill="#3fc88a"/><path d="M407 752Q410 760 420 759Q413 756 412 750Z" fill="#104f96"/>
<path d="M455 757L457 751A10 10 0 1 1 460 755Z" fill="none" stroke="#29b84a" stroke-width="2"/><path d="M461 744Q461 751 469 752" fill="none" stroke="#29b84a" stroke-width="2.500"/>
<circle cx="478.500" cy="756" r="8" fill="#3e4650" stroke="#8a8f96"/>
<circle cx="515" cy="748" r="10.500" fill="#101010"/><path d="M515 741L522.500 753H507.500Z" fill="#f2a81d"/><path d="M515 746L518.500 751.500H511.500Z" fill="#101010"/>
<circle cx="564" cy="748" r="12" fill="#7cb440"/><path d="M559 743V751Q559 755 563 755M568 743V751" fill="none" stroke="#fff" stroke-width="3"/><path d="M557 743H560M566 743H571" stroke="#fff" stroke-width="2"/>
<rect x="601" y="736" width="24" height="24" rx="1" fill="#1d3fb8"/><rect x="607" y="737" width="14" height="8" fill="#ddd"/><rect x="616" y="738" width="8" height="7" fill="#fff"/><rect x="604" y="747" width="18" height="12" fill="#f6b6bc"/><path d="M604 750H622M604 753H622M604 756H622" stroke="#c77"/>
<rect x="650.500" y="736.500" width="23" height="23" fill="none" stroke="#0f9ee8"/><circle cx="662" cy="748" r="8.500" fill="none" stroke="#0f9ee8" stroke-width="1.500"/><path d="M659 742V754M665 742L660 748 667 753" fill="none" stroke="#0f9ee8" stroke-width="1.500"/>
<path d="M705 741L712 738 716 743 708 747Z" fill="#9a9aa0"/><path d="M716 742L722 746 716 752 710 747Z" fill="#43a845"/><path d="M700 751L706 748 711 752 704 756Z" fill="#3560b8"/><path d="M708 754L714 750 719 755 713 760Z" fill="#d8384a"/>
<path d="M750 741L770 737V753L750 756Z" fill="#2a8f9c" stroke="#c8c8c8"/><path d="M756 757H766V759H756Z" fill="#aaa"/><path d="M752 752L760 744 768 750" fill="none" stroke="#7fd8e0"/>
<rect x="797" y="741" width="14" height="14" rx="2" fill="#5059c9"/><text x="800" y="752" fill="#fff" font-family="'Liberation Sans',sans-serif" font-weight="bold" font-size="11">T</text><circle cx="808" cy="739" r="3.500" fill="#7b83eb"/><circle cx="817" cy="741" r="2.700" fill="#7b83eb"/><path d="M812 745H821V752Q820 756 816 756H811Z" fill="#7b83eb"/>
<rect x="846" y="736" width="24" height="24" fill="#2a1c08"/><path d="M852 744C852 738 864 738 864 744 864 749 852 752 852 758H864" fill="none" stroke="#e08a20" stroke-width="2.200"/><circle cx="855" cy="744" r="1.500" fill="#eee"/><circle cx="866" cy="746" r="1.500" fill="#eee"/>
<path d="M1001 752L1007 746.500 1013 752" fill="none" stroke="#ddd" stroke-width="1.300"/>
<rect x="1023" y="742" width="11" height="11" rx="2" fill="#5059c9"/><text x="1025" y="751" fill="#fff" font-family="'Liberation Sans',sans-serif" font-weight="bold" font-size="9">T</text><circle cx="1031" cy="741" r="2.500" fill="#7b83eb"/><circle cx="1037" cy="743" r="2" fill="#7b83eb"/><path d="M1034 745H1040V750Q1039 755 1034 755Z" fill="#7b83eb"/>
<path d="M1048 743L1063 741V753L1048 754Z" fill="none" stroke="#ddd"/><path d="M1052 750L1054 745H1058M1058 748L1056 752H1052" fill="none" stroke="#ddd"/><circle cx="1059" cy="755" r="3.200" fill="#f08a20"/>
<rect x="1071" y="741" width="16" height="10" fill="#333" stroke="#aaa"/><circle cx="1079" cy="746" r="3.500" fill="none" stroke="#d22" stroke-width="1.300"/><path d="M1076 746H1082" stroke="#d22"/><rect x="1071" y="754" width="7" height="2" fill="#bbb"/><rect x="1080" y="754" width="7" height="2" fill="#bbb"/>
<circle cx="1103" cy="748" r="8" fill="#7cb440"/><path d="M1100 744V750Q1100 753 1103 753M1106 744V750" fill="none" stroke="#fff" stroke-width="2"/>
<rect x="1123" y="744" width="11" height="8" fill="#ddd"/><path d="M1120 748H1123M1118 745V752" stroke="#ddd"/><rect x="1134" y="746" width="1.500" height="4" fill="#ddd"/>
<path d="M1145 744H1158V753H1145ZM1151.500 753V757M1147 757H1156" fill="none" stroke="#ddd"/><rect x="1143" y="742" width="4" height="4" fill="#1e2530" stroke="#ddd"/>
<path d="M1167 742H1183V750Q1180 756 1175 758Q1170 756 1167 750Z" fill="#5ea820"/><circle cx="1175" cy="748" r="3.500" fill="#111"/><path d="M1169 744L1181 752M1181 744L1169 752M1168 748H1182" stroke="#111"/>
<path d="M1191 745H1194L1198 742V754L1194 751H1191Z" fill="none" stroke="#ddd"/><path d="M1201 745Q1203 748 1201 751M1204 743Q1207 748 1204 753" fill="none" stroke="#ddd"/>
<path d="M1325 741H1345V753H1333L1329 757V753H1325Z" fill="#f4f4f4"/><path d="M1328 744.500H1342M1328 747.500H1342M1328 750.500H1337" stroke="#333"/>
<circle cx="1341" cy="756" r="8" fill="#3e4650" stroke="#8a8f96"/>
</svg>
<div class="t tb" style="left:476px;top:748px;font-size:11px;font-weight:bold">1</div>
<div class="t tb" style="left:1338px;top:748px;font-size:11px;font-weight:bold">1</div>
<div class="t tb" style="left:1218px;top:740px;font-size:11.500px">РУС</div>
<div class="t tb" style="left:1266px;top:731px;font-size:11.500px">14:33</div>
<div class="t tb" style="left:1254px;top:749px;font-size:11.500px">15.05.2025</div>
</body></html>
